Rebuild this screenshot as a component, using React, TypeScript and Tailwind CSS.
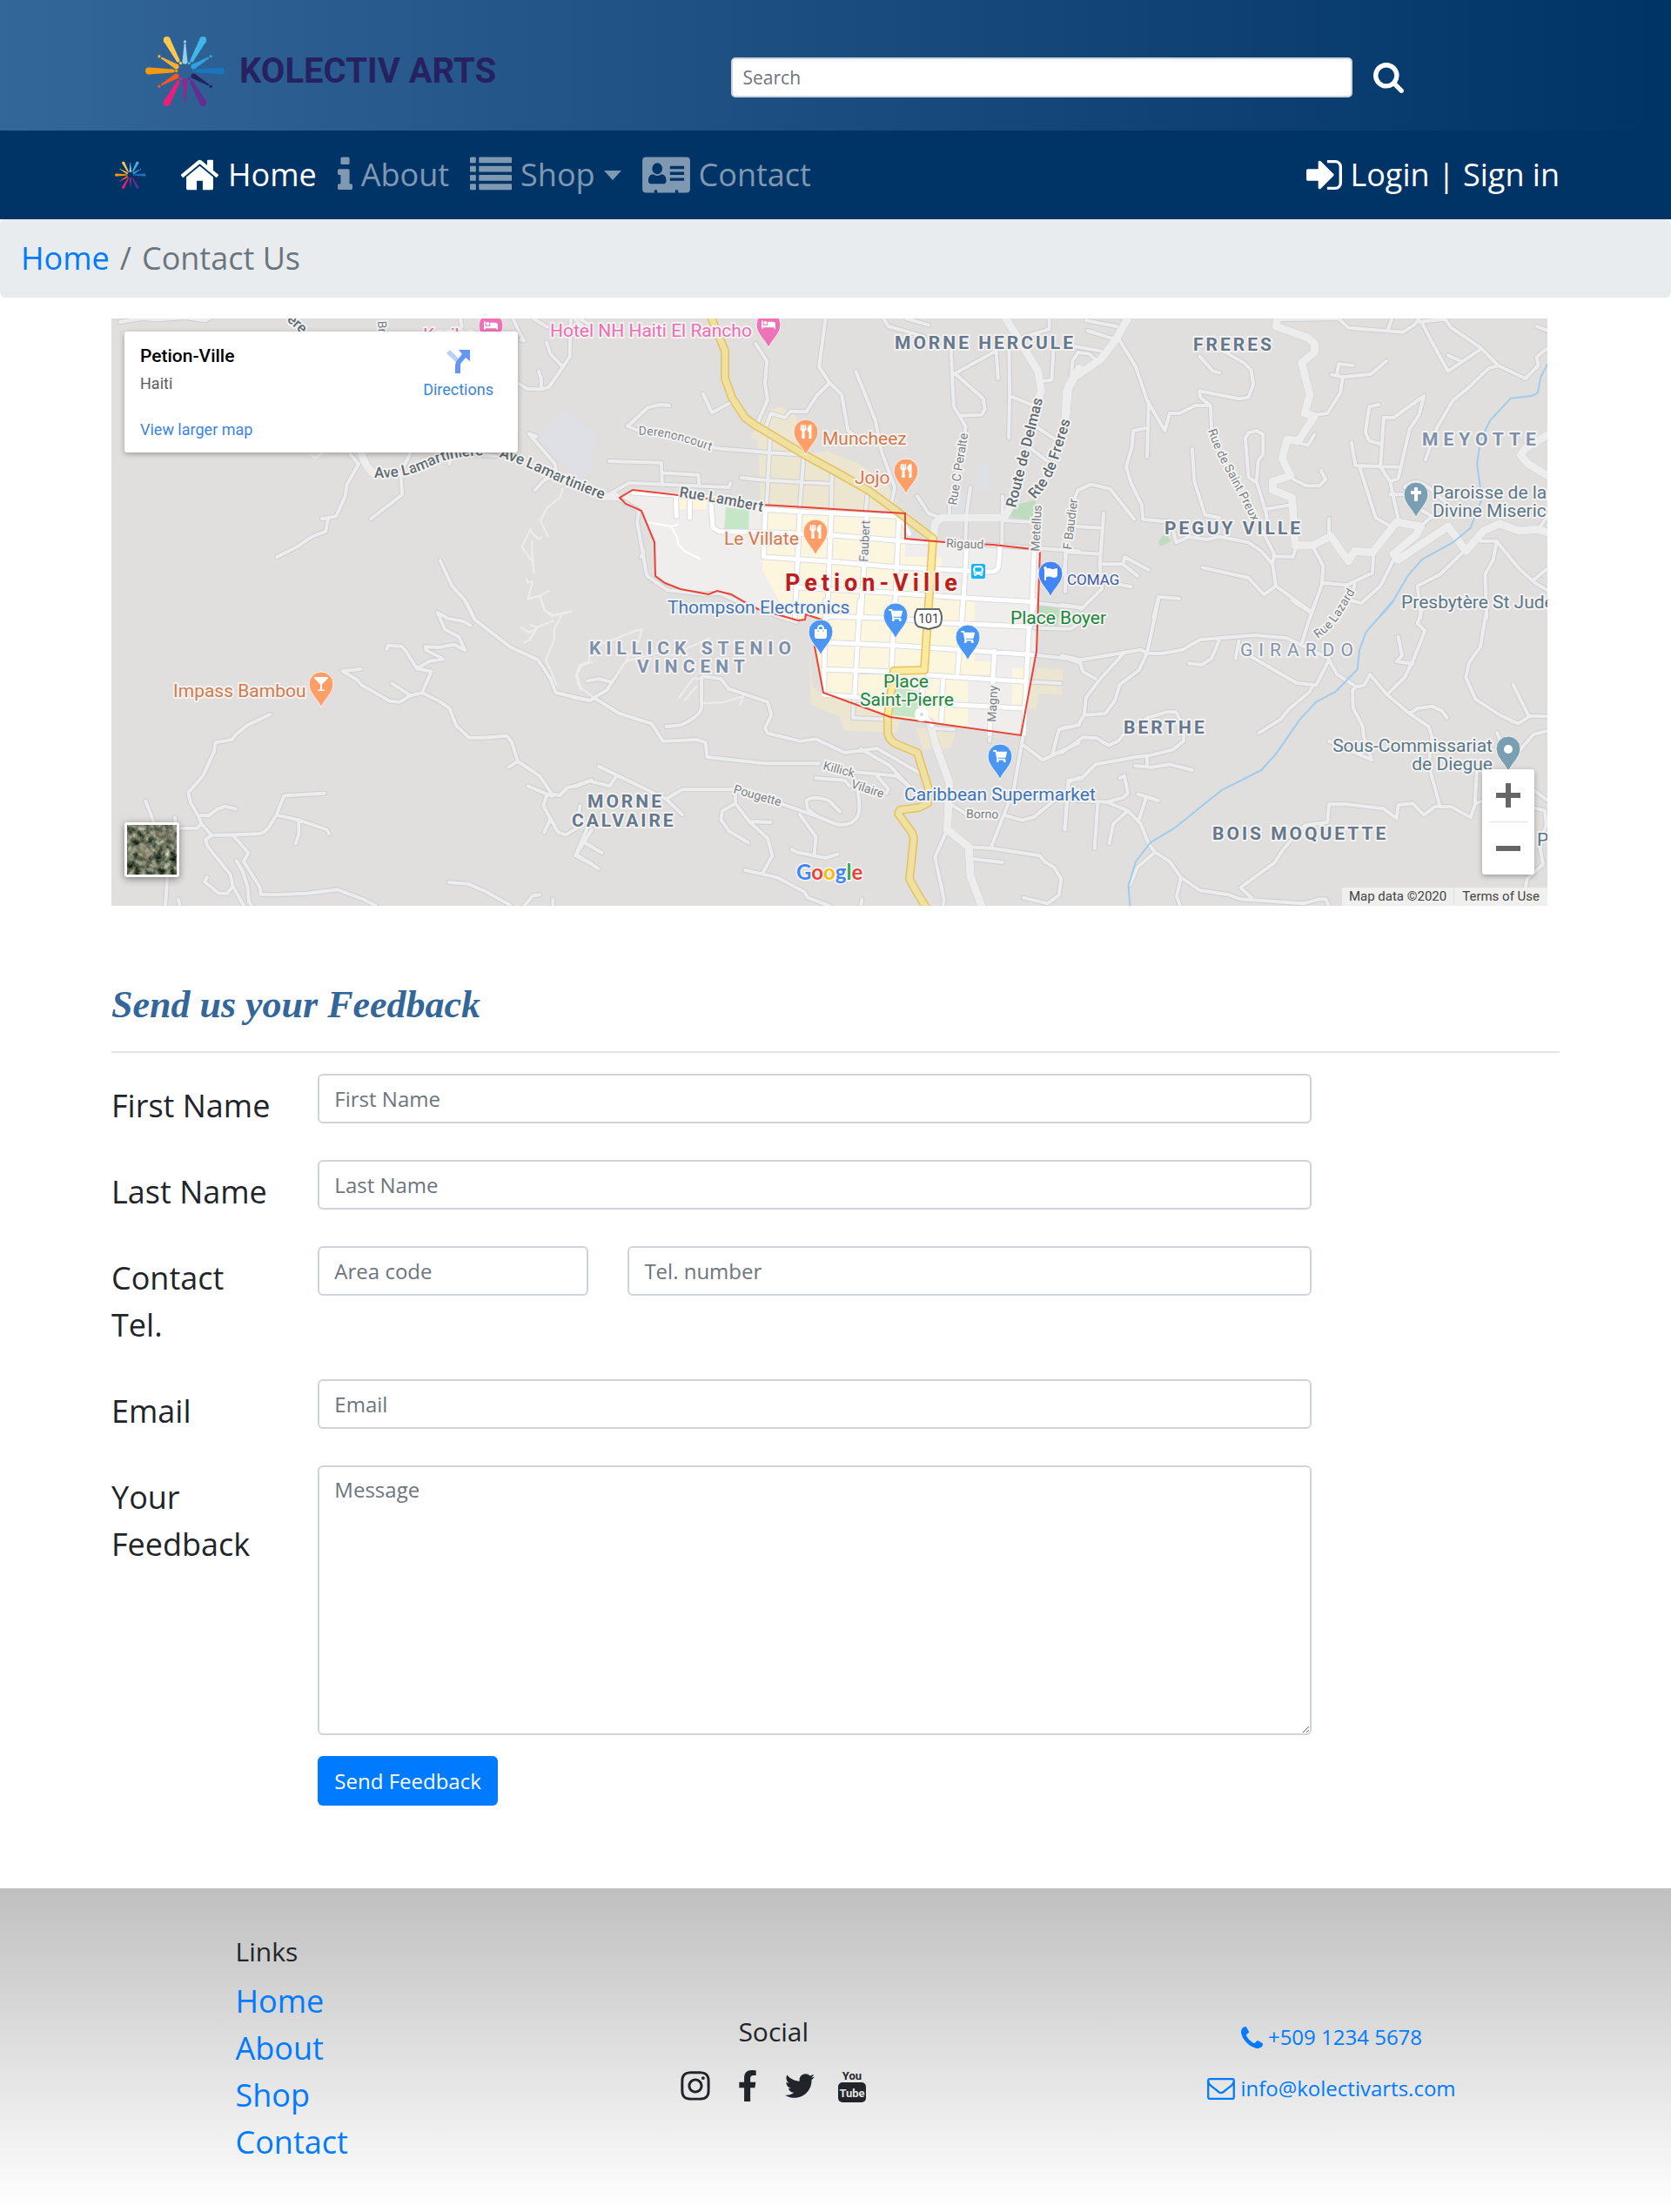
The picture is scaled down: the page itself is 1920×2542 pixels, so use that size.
import React from "react";
import {
  FaBed,
  FaCross,
  FaFacebookF,
  FaGlassMartini,
  FaInstagram,
  FaShoppingBag,
  FaShoppingCart,
  FaTwitter,
  FaUtensils,
  FaBus,
  FaFlag,
} from "react-icons/fa";

/* ---------- Icons ---------- */

type GlyphProps = { box: string; className: string; children: React.ReactNode };

function Glyph({ box, className, children }: GlyphProps) {
  return (
    <svg viewBox={box} className={`shrink-0 fill-current ${className}`} aria-hidden="true">
      {children}
    </svg>
  );
}

const HomeIcon = () => (
  <Glyph box="64 0 1664 1792" className="h-12 w-[45px]">
    <path d="M1472 992v480q0 26-19 45t-45 19h-384v-384h-256v384h-384q-26 0-45-19t-19-45v-480q0-1 .5-3t.5-3l575-474 575 474q1 2 1 6zm223-69l-62 74q-8 9-21 11h-3q-13 0-21-7l-692-577-692 577q-12 8-24 7-13-2-21-11l-62-74q-8-10-7-23.5t11-21.5l719-599q32-26 76-26t76 26l244 204v-195q0-14 9-23t23-9h192q14 0 23 9t9 23v408l219 182q10 8 11 21.5t-7 23.5z" />
  </Glyph>
);

const InfoIcon = () => (
  <Glyph box="576 0 640 1792" className="h-12 w-[17px]">
    <path d="M1216 1344v128q0 26-19 45t-45 19h-512q-26 0-45-19t-19-45v-128q0-26 19-45t45-19h64v-384h-64q-26 0-45-19t-19-45v-128q0-26 19-45t45-19h384q26 0 45 19t19 45v576h64q26 0 45 19t19 45zm-128-1152v192q0 26-19 45t-45 19h-256q-26 0-45-19t-19-45v-192q0-26 19-45t45-19h256q26 0 45 19t19 45z" />
  </Glyph>
);

const ListIcon = () => (
  <Glyph box="0 0 1792 1792" className="h-12 w-12">
    {[128, 512, 896, 1280].map((y) => (
      <React.Fragment key={y}>
        <rect x="0" y={y} width="256" height="256" rx="32" />
        <rect x="384" y={y} width="1408" height="256" rx="32" />
      </React.Fragment>
    ))}
  </Glyph>
);

const CardIcon = () => (
  <Glyph box="0 0 2048 1792" className="h-12 w-[55px]">
    <path
      fillRule="evenodd"
      d="M160 128H1888Q2048 128 2048 288V1504Q2048 1664 1888 1664H1536V1568Q1536 1536 1504 1536H1440Q1408 1536 1408 1568V1664H640V1568Q640 1536 608 1536H544Q512 1536 512 1568V1664H160Q0 1664 0 1504V288Q0 128 160 128ZM460 870Q256 880 256 1150Q256 1280 370 1280H910Q1024 1280 1024 1150Q1024 880 820 870Q740 930 640 930Q540 930 460 870ZM640 384A220 240 0 0 0 640 864A220 240 0 0 0 640 384ZM1184 512V640H1792V512ZM1184 768V896H1792V768ZM1184 1024V1152H1792V1024Z"
    />
  </Glyph>
);

const SignInIcon = () => (
  <Glyph box="128 0 1536 1792" className="h-12 w-[41px]">
    <path d="M1312 896q0 26-19 45l-544 544q-19 19-45 19t-45-19-19-45v-288h-448q-26 0-45-19t-19-45v-384q0-26 19-45t45-19h448v-288q0-26 19-45t45-19 45 19l544 544q19 19 19 45zm352-352v704q0 119-84.5 203.5t-203.5 84.5h-320q-13 0-22.5-9.5t-9.5-22.5q0-4-1-20t-.5-26.5 3-23.5 10-19.5 20.5-6.5h320q66 0 113-47t47-113v-704q0-66-47-113t-113-47h-312l-11.5-1-11.5-3-8-5.5-7-9-2-13.5q0-4-1-20t-.5-26.5 3-23.5 10-19.5 20.5-6.5h320q119 0 203.5 84.5t84.5 203.5z" />
  </Glyph>
);

const SearchIcon = () => (
  <Glyph box="64 128 1664 1664" className="h-[35px] w-[35px]">
    <path d="M1216 832q0-185-131.5-316.5t-316.5-131.5-316.5 131.5-131.5 316.5 131.5 316.5 316.5 131.5 316.5-131.5 131.5-316.5zm512 832q0 52-38 90t-90 38q-54 0-90-38l-343-342q-179 124-399 124-143 0-273.5-55.5t-225-150-150-225-55.5-273.5 55.5-273.5 150-225 225-150 273.5-55.5 273.5 55.5 225 150 150 225 55.5 273.5q0 220-124 399l343 343q37 37 37 90z" />
  </Glyph>
);

const PhoneIcon = () => (
  <Glyph box="192 128 1408 1408" className="h-[25px] w-[25px]">
    <path d="M1600 1240q0 27-10 70.5t-21 68.5q-21 50-122 106-94 51-186 51-27 0-53-3.5t-57.5-12.5-47-14.5-55.5-20.5-49-18q-98-35-175-83-127-79-264-216t-216-264q-48-77-83-175-3-9-18-49t-20.5-55.5-14.5-47-12.5-57.5-3.5-53q0-92 51-186 56-101 106-122 25-11 68.5-21t70.5-10q14 0 21 3 18 6 53 76 11 19 30 54t35 63.5 31 53.5q3 4 17.5 25t21.5 35.5 7 28.5q0 20-28.5 50t-62 55-62 53-28.5 46q0 9 5 22.5t8.5 20.5 14 24 11.5 19q76 137 174 235t235 174q2 1 19 11.5t24 14 20.5 8.5 22.5 5q18 0 46-28.5t53-62 55-62 50-28.5q14 0 28.5 7t35.5 21.5 25 17.5q25 15 53.5 31t63.5 35 54 30q70 35 76 53 3 7 3 21z" />
  </Glyph>
);

const EnvelopeIcon = () => (
  <Glyph box="0 256 1792 1408" className="h-[25px] w-8">
    <path d="M1664 1504v-768q-32 36-69 66-268 206-426 338-51 43-83 67t-86.5 48.5-102.5 24.5h-2q-48 0-102.5-24.5t-86.5-48.5-83-67q-158-132-426-338-37-30-69-66v768q0 13 9.5 22.5t22.5 9.5h1472q13 0 22.5-9.5t9.5-22.5zm0-1051v-24.5l-.5-13-3-12.5-5.5-9-9-7.5-14-2.5h-1472q-13 0-22.5 9.5t-9.5 22.5q0 168 147 284 193 152 401 317 6 5 35 29.5t46 37.5 44.5 31.5 50.5 27.5 43 9h2q20 0 43-9t50.5-27.5 44.5-31.5 46-37.5 35-29.5q208-165 401-317 54-43 100.5-115.5t46.5-131.5zm128-37v1088q0 66-47 113t-113 47h-1472q-66 0-113-47t-47-113v-1088q0-66 47-113t113-47h1472q66 0 113 47t47 113z" />
  </Glyph>
);

const YoutubeIcon = () => (
  <svg viewBox="0 0 34 40" className="h-10 w-[34px]" aria-hidden="true">
    <text x="17" y="13" textAnchor="middle" className="fill-[#212529] font-[Roboto] text-[13px] font-bold">
      You
    </text>
    <rect x="1" y="16" width="32" height="23" rx="5" fill="#212529" />
    <text x="17" y="33" textAnchor="middle" className="fill-[#e4e4e4] font-[Roboto] text-[13px] font-bold">
      Tube
    </text>
  </svg>
);

/* ---------- Logo ---------- */

// Each ray: outer x, outer y, outer radius, inner x, inner y, inner radius, colour.
const rays: [number, number, number, number, number, number, string][] = [
  [25, 5, 4, 38, 29, 2, "#ffc94d"],
  [67, 5, 4, 54, 29, 2, "#41b6e9"],
  [46, 10, 1, 46, 30, 3, "#8fd0f0"],
  [19, 26, 1, 36, 36, 3, "#fbb034"],
  [73, 26, 1, 56, 36, 3, "#2fa3dc"],
  [4, 41, 4, 32, 41, 2, "#f59a0c"],
  [88, 41, 4, 60, 41, 2, "#1a75bc"],
  [19, 57, 1, 36, 47, 3, "#f05a22"],
  [73, 57, 1, 56, 47, 3, "#262262"],
  [25, 78, 4, 38, 54, 2, "#ed1e79"],
  [67, 78, 4, 54, 54, 2, "#662d91"],
  [46, 73, 1, 46, 53, 3, "#92278f"],
];

const beads: [number, number, string][] = [
  [41, 32, "#ffc94d"],
  [51, 32, "#41b6e9"],
  [46, 7, "#8fd0f0"],
  [16, 24, "#fbb034"],
  [76, 24, "#2fa3dc"],
  [36, 41, "#f59a0c"],
  [56, 41, "#1a75bc"],
  [16, 59, "#f05a22"],
  [76, 59, "#262262"],
  [41, 50, "#ed1e79"],
  [51, 50, "#662d91"],
  [46, 76, "#92278f"],
];

function Sunburst({ className }: { className: string }) {
  return (
    <svg viewBox="0 0 93 82" className={`shrink-0 ${className}`} aria-hidden="true">
      {rays.map(([ox, oy, ow, ix, iy, iw, color]) => {
        const length = Math.hypot(ox - ix, oy - iy);
        const nx = (oy - iy) / length;
        const ny = (ix - ox) / length;
        return (
          <g key={color} fill={color}>
            <circle cx={ox} cy={oy} r={ow} />
            <circle cx={ix} cy={iy} r={iw} />
            <path
              d={`M${ox + nx * ow} ${oy + ny * ow}L${ix + nx * iw} ${iy + ny * iw}L${ix - nx * iw} ${iy - ny * iw}L${ox - nx * ow} ${oy - ny * ow}Z`}
            />
          </g>
        );
      })}
      {beads.map(([cx, cy, color]) => (
        <circle key={color} cx={cx} cy={cy} r="1.7" fill={color} />
      ))}
    </svg>
  );
}

/* ---------- Map ---------- */

type Sheet = { at: string; minor: string; major: string; trail: string };

const sheets: Sheet[] = [
  {
    at: "translate(120 360) scale(.35714 .33333)",
    minor:
      "M790 485L818 520 780 590 775 630 745 700 700 709M720 705L712 752 668 770 620 805 555 840M985 480L953 550 958 625 858 708M1120 480L1110 520M1200 487L1260 492M1145 18L1150 45 1140 65M1315 18L1330 55 1350 95 1340 92M1380 18L1425 48M1500 18L1497 150 1475 185 1430 255 1405 262 1360 260 1325 238M1475 185L1435 140 1422 100M1405 255V225L1397 200M1530 18L1568 45M1390 425L1365 415 1450 520 1455 555 1415 575 1385 610M1080 852L1118 940 1162 992 1190 1050M50 30L120 18 170 22 260 15 325 25 345 12",
    major: "M825 470Q835 530 870 555",
    trail:
      "M665 490L678 500 700 482M1475 605L1465 635 1425 670 1403 715 1427 770M1372 742L1343 805 1380 860M1376 785V830L1382 895M1370 750L1395 778 1405 772M1358 915L1362 928 1378 925 1362 985 1400 975 1430 957M1400 975L1415 1022 1440 1045 1500 1028",
  },
  {
    at: "translate(120 690) scale(.35714 .33333)",
    minor:
      "M1160 0L1190 65 1305 160 1395 205 1435 270 1452 318 1560 345M1178 86L1155 72 1105 62 1072 42 1095 100 1140 125 1160 172 1125 152 1075 162 1032 160 1035 172 1090 202 1045 210 1005 235M908 168L912 155 955 158 970 175 1005 235 1052 245 1022 318 985 328 925 286M985 328L950 350 918 347 825 290 815 275 765 243 825 237M1022 318L1078 348 1110 372 1132 432 1173 473 1220 473 1295 467 1310 488 1330 555 1300 575M1330 555L1400 605 1440 668 1465 672 1490 645 1520 640 1568 620M1363 640L1440 675M1422 675L1412 708 1435 752 1415 800M1435 752L1460 800 1485 808 1520 785 1530 708M1568 790L1515 880 1568 908M1545 835L1568 850M533 393L460 430 425 460 410 480 357 490 353 520 317 605 270 662 277 697 303 745 312 770 345 810 495 805Q520 798 530 780L553 740 578 673 708 665M553 740L625 757 715 790 722 805M625 757V808L615 838M303 740L335 742 365 718 390 710 422 719M312 770L297 785 230 786M133 692L160 768M227 748L228 768M345 810L325 825 332 848 405 945 413 985 448 1052M413 985L395 1010 368 1010 322 970 330 955M415 812L463 870 448 900 500 988 503 1013 540 1015 650 1010 750 997 832 1030 875 1054M425 898L445 935 460 985 465 1040 475 1054M202 955L196 1054M238 1030L243 1054M1108 972L1170 977 1220 1000 1305 1050M1350 1054L1378 1018 1400 1015M1443 1030V1054",
    major: "",
    trail:
      "M1405 0L1418 35 1445 50 1500 38M1445 70L1393 92 1370 85M1393 92L1368 135 1350 145M1340 92L1365 110 1385 100M1475 40L1447 100 1447 135 1420 205 1455 292M1568 212L1535 225 1520 255 1532 300 1568 330",
  },
  {
    at: "translate(660 360) scale(.3699 .33333)",
    minor:
      "M563 105L598 165 592 240 600 298 570 375M780 18L760 185 793 240 830 280 850 405 885 430M793 240L752 285 720 340 670 338 655 360 610 345 595 390M875 202L935 370 955 480 995 600 985 655M295 318L265 315 228 325 165 390 200 405M390 455L440 465 600 480 715 488M400 278L427 343 490 305M108 510L270 515 272 580M272 550L385 557 388 595M90 635L170 585 480 600 485 585M608 425L597 665M712 495L700 670M800 550L798 670M910 620L905 680M518 567L590 575 800 588M130 635L200 680 195 720 225 905 290 955 400 968 450 965 520 1000 560 1025M215 820L207 840M960 18L975 45 1085 80M1030 18L1100 40M1170 130L1178 320 1215 390 1212 430M1178 210L1310 130 1316 225M1185 210L1270 295 1275 330 1265 350 1195 353M1350 120L1352 285 1349 430M1352 285L1430 320M1475 18V55L1400 80M1488 120L1483 230 1450 235M1440 395L1500 440M1410 460L1475 515M1230 600L1217 700 1215 800M1330 630L1328 800M1065 630L1100 690 1125 700M1165 690V660M1340 715L1430 720M1280 798L1568 820M1525 820V960M1440 1000L1568 1015M0 18L30 50",
    major: "M80 632L130 632M1340 18L1440 200 1450 270 1430 320M1568 190L1535 250 1525 380M1115 775L1120 725 1140 705 1335 705 1355 665",
    trail: "",
  },
  {
    at: "translate(660 690) scale(.3699 .33333)",
    minor:
      "M0 335L50 345 60 335M60 335L100 310 130 260M40 278L75 270 110 280M60 335L140 390 240 425 275 485 380 480 408 490 412 540 590 562 760 562M860 590L1000 605 1040 640M400 262L455 270 480 305 600 350 612 395 592 440 600 458 700 485 750 478 840 525 940 510 1080 600M890 512L980 570 1030 630M395 265V370Q390 400 330 430L285 435M940 605L975 650 970 665M750 613L840 620 855 640M880 655Q890 720 880 745 860 780 815 772L755 745 640 700M755 745L725 720 720 690Q740 670 790 690L825 728M495 652H335L285 685 335 738M75 572L285 685M130 605L110 640 45 622 0 640M500 665V700L460 725 455 755 480 795 540 835M500 700L545 765 600 820 615 880 585 940M545 762L610 765M700 738L750 815 745 880M675 858L690 868 780 888 818 875M530 930L630 955 715 1005 725 1025 795 1054M45 770L5 875 75 925M25 830L85 870M890 1054L893 1030M900 345H868L865 405 975 410M1158 790L1120 885 1148 1030 1145 1054M1225 850L1300 855 1445 880 1460 900 1490 920 1512 960 1505 1015 1470 1045 1395 1025M1230 890L1330 903M1395 460L1365 650 1295 850M1335 740L1390 758 1430 745 1500 680 1568 650M1165 700L1215 735M1110 440L1180 445M1395 500L1420 520 1455 550 1568 490M1485 530L1505 445 1568 430M1568 610L1535 625 1523 790M1430 188L1530 200 1568 215M1400 280L1510 286M1430 95L1540 98 1568 80M1292 450L1290 485M620 50L690 75",
    major: "M1105 420L1120 490 1165 630 1158 790 1225 850 1230 950 1265 1054",
    trail:
      "M130 260L200 140 210 100 190 105 50 165 45 210 15 225 5 260 20 310M395 355L460 352 525 330 515 360M395 270L370 268 325 335M380 295L342 345M300 190L420 130M160 210L260 180",
  },
  {
    at: "translate(1220 360) scale(.3699 .33333)",
    minor:
      "M672 22L860 18 890 50 1060 65 1095 40 1110 18M1110 30L1190 20 1210 50 1300 118 1355 180 1440 225 1480 180 1475 150 1509 120M1120 35L1150 100 1200 200 1300 125M1200 145L1240 165M1355 180L1325 190 1260 260 1215 300 1165 395 1130 505M1025 20L1012 60M1475 45L1509 60M75 25L170 45M80 60L165 90M30 215L33 165 50 135 85 140 105 160M20 110L120 130M175 85L230 185 265 300 320 405 335 345 365 345 415 318 462 318 465 400M270 305L265 495M265 395L222 405 218 460 200 530 215 585 248 660 252 710 340 720 355 790 395 770 450 780 490 770 580 790 620 820 655 865 665 940 628 970 580 912 438 877M462 318L430 290 428 268 550 295 580 290 595 245 588 195 565 170 500 130M428 148L470 200 490 205M405 467L412 580 445 695 490 705M595 690L660 830 655 860M660 838L718 840 728 805M600 580L580 565 570 430 580 412 605 405 625 418 625 485 610 510 605 580 635 690 640 740M635 675L715 660M720 572L760 595 800 595 820 572 805 542M745 450L765 455 785 418M785 350L825 345 865 275 873 220 960 210 1008 165M838 212L873 220M855 210L860 175 905 180M830 708V770M985 315L955 322 943 410 955 440 990 450M990 525L1000 360 1030 360 1125 285 1110 350 1080 400 1045 570 1020 580 1045 710M900 445L912 525 1045 530M925 530L975 705 1030 740M990 530L1020 580M1020 625H1060M1065 600Q1100 560 1150 610L1190 650M1110 740L1150 700 1120 680M780 805L812 870 808 935 770 1050M812 930L885 937 965 895 968 830M910 935L905 960M665 940L770 1025M1035 840L990 940 930 1000 900 990M1300 785H1350L1420 880 1470 930 1509 955M1250 820L1175 900 1105 940 1115 1050M1350 790L1340 850 1315 900 1320 1050M1465 920L1509 880M1480 745L1509 700M40 640L50 610 90 590 150 605 225 710M40 735L125 740M130 690L118 870 125 950 60 1020M10 822L120 830M118 865L190 865 235 905M190 865L195 840 270 885M15 820L5 900M155 930L215 943M365 983L300 978 285 1050M0 1005L60 1015",
    major:
      "M205 18L165 95 120 160 40 220 15 270 10 380M670 18L665 45 765 85 785 105 785 135 745 170 770 280 755 345 785 355 735 440 700 435 685 500 710 560 655 580 655 610 715 635 725 800 780 800 835 768 890 855 910 820 965 825 1040 720 1115 735 1100 765 1030 830 1045 850 1200 735 1255 820 1310 750 1360 725 1420 750 1480 745 1509 755M1509 420L1440 465 1425 490 1450 520 1509 560",
    trail: "",
  },
  {
    at: "translate(1220 690) scale(.3699 .33333)",
    minor:
      "M0 190L60 205 245 170 265 182 310 183 375 170 430 135 600 120 700 130 830 200M745 150L770 60 790 0M715 0L770 40M300 0L265 180 240 240 180 290 165 345 135 390 70 395 50 430 0 440M190 185L120 270 75 335 70 395M55 205L65 245 105 270M490 135L465 200 435 222 395 217M550 140L540 200M590 195L730 285 790 292 830 205 855 255 915 298 940 292 957 255 1010 325 1065 265 1090 210 1128 105 1105 80 1118 35M1045 125L1057 190 1040 210 1090 218M1010 325L1080 390 1140 435 1150 470 1140 570 1175 710M1080 390L1105 372 1150 365 1180 380 1197 405M780 292L770 315 705 375 680 410 612 457M915 298L903 310 905 370 935 435 937 465 963 550 830 485M1320 30L1300 160 1265 215 1255 265 1285 340 1360 395 1418 425 1455 398 1509 400M1402 290L1450 398M1352 455L1365 490M1509 450L1465 462 1420 520M0 525L65 472 110 475 145 500 175 485 200 450 265 405 325 385 355 385 380 440 378 485 345 515 270 535 230 540 105 565 60 615 20 620 10 790M265 540V570M228 570L280 575 335 565 405 585M180 612L195 605 205 665 190 680 140 695 50 690M112 695L102 855M140 695L205 725 245 770 270 840 290 868 335 900 370 955 430 1000 520 1015 555 1030 750 1045 800 1030 820 1030 830 1054M205 725L160 770 147 838M237 668L300 690M262 680L240 755M290 868L235 920 212 980M370 955L357 1020 368 1054M590 1025L555 990 660 905 690 855 755 775 825 765 830 703 880 702 1000 718 1040 752 1045 705 1090 700 1125 740 1160 710 1210 712 1270 748 1285 700 1310 690M1290 580L1283 700M1468 655L1509 690M1468 715L1500 725 1505 770 1485 850 1495 910 1445 960 1430 1054",
    major: "",
    trail: "",
  },
];

const townStreets = [
  {
    at: "translate(660 360) scale(.3699 .33333)",
    d: "M180 618L420 635 580 675 690 683 1010 700 1040 760M593 680L588 840M700 683L685 1050M798 690L785 1050M908 700L890 1050M1008 700L995 1050M588 840L790 855 1000 875 1220 887 1290 892Q1315 892 1318 870L1322 805M425 660L430 740 450 752 600 755 800 765 1020 785 1110 790M690 945L1000 965 1200 980 1430 995M1218 810L1205 1050M1428 820L1420 1050M315 630L317 700M358 640V705",
  },
  {
    at: "translate(660 690) scale(.3699 .33333)",
    d: "M780 0L775 320M887 0L870 330M995 0L985 240M1207 0L1190 250M1430 0L1412 90 1395 460M1305 175L1290 460M1145 265L1140 420M780 55L1000 62 1150 78 1415 90M780 145L1000 155 1200 170 1430 188M775 238L980 245M1100 258L1400 280M1150 358L1395 372M775 325L900 335M1080 290L1085 390 1110 430",
  },
];

const townOutline =
  "M712 572L719 579 737 587 752 623 753 662 764 670 782 677 814 683 824 679 840 683 856 692 871 700 917 713 925 712 926 706 944 712 936 743 946 796 1023 824 1173 845 1191 748 1193 690 1195 632 1141 626 1085 623 1040 619 1040 590 926 583 875 580 727 563Z";

type Tone = "food" | "shop" | "district" | "pale" | "thin" | "park" | "civic" | "hotel";

const tones: Record<Tone, string> = {
  food: "fill-[#d27a4c]",
  shop: "fill-[#3f75b9]",
  district: "fill-[#66788e] font-bold tracking-[3px]",
  pale: "fill-[#7e90aa] font-bold tracking-[6px]",
  thin: "fill-[#8595ad] tracking-[7px]",
  park: "fill-[#1b873b]",
  civic: "fill-[#5c7888]",
  hotel: "fill-[#ec6fb4]",
};

const places: { text: string; x: number; y: number; tone: Tone; end?: boolean }[] = [
  { text: "Hotel NH Haiti El Rancho", x: 632, y: 387, tone: "hotel" },
  { text: "Kariba", x: 486, y: 392, tone: "hotel" },
  { text: "Muncheez", x: 945, y: 511, tone: "food" },
  { text: "Jojo", x: 982, y: 556, tone: "food" },
  { text: "Le Villate", x: 832, y: 626, tone: "food" },
  { text: "Impass Bambou", x: 199, y: 801, tone: "food" },
  { text: "Thompson Electronics", x: 767, y: 705, tone: "shop" },
  { text: "Caribbean Supermarket", x: 1039, y: 920, tone: "shop" },
  { text: "Place Boyer", x: 1161, y: 717, tone: "park" },
  { text: "Place", x: 1015, y: 790, tone: "park" },
  { text: "Saint-Pierre", x: 988, y: 811, tone: "park" },
  { text: "Paroisse de la", x: 1646, y: 573, tone: "civic" },
  { text: "Divine Misericorde", x: 1646, y: 594, tone: "civic" },
  { text: "Presbytère St Jude", x: 1610, y: 699, tone: "civic" },
  { text: "Sous-Commissariat", x: 1715, y: 864, tone: "civic", end: true },
  { text: "de Diegue", x: 1715, y: 885, tone: "civic", end: true },
  { text: "P", x: 1766, y: 972, tone: "civic" },
  { text: "MORNE HERCULE", x: 1028, y: 401, tone: "district" },
  { text: "FRERES", x: 1371, y: 403, tone: "district" },
  { text: "PEGUY VILLE", x: 1338, y: 614, tone: "district" },
  { text: "BERTHE", x: 1291, y: 843, tone: "district" },
  { text: "BOIS MOQUETTE", x: 1393, y: 965, tone: "district" },
  { text: "MORNE", x: 675, y: 928, tone: "district" },
  { text: "CALVAIRE", x: 657, y: 950, tone: "district" },
  { text: "MEYOTTE", x: 1634, y: 512, tone: "pale" },
  { text: "KILLICK STENIO", x: 677, y: 752, tone: "pale" },
  { text: "VINCENT", x: 732, y: 773, tone: "pale" },
  { text: "GIRARDO", x: 1425, y: 754, tone: "thin" },
];

const curvedStreets: { text: string; path: string; small?: boolean }[] = [
  { text: "Ave Lamartiniere", path: "M430 549Q470 550 500 533 525 523 566 523" },
  { text: "Ave Lamartiniere", path: "M573 525Q610 537 640 553L710 581" },
  { text: "Rue Lambert", path: "M780 571L820 577 890 591" },
  { text: "Rte de Freres", path: "M1189 574Q1208 555 1217 525L1232 477" },
  { text: "Derenoncourt", path: "M734 500Q765 498 830 523", small: true },
  { text: "Rue de Saint Preux", path: "M1388 495Q1396 520 1412 547L1452 625", small: true },
  { text: "Rue Lazard", path: "M1514 734Q1530 724 1541 706L1568 662", small: true },
];

const straightStreets: { text: string; x: number; y: number; angle: number; big?: boolean }[] = [
  { text: "Route de Delmas", x: 1167, y: 584, angle: -76, big: true },
  { text: "ere", x: 329, y: 368, angle: 42, big: true },
  { text: "Rue C Peralte", x: 1099, y: 581, angle: -81 },
  { text: "Faubert", x: 997, y: 646, angle: -87 },
  { text: "Rigaud", x: 1087, y: 629, angle: 2 },
  { text: "Metellus", x: 1194, y: 634, angle: -87 },
  { text: "F Baudier", x: 1231, y: 632, angle: -83 },
  { text: "Killick", x: 945, y: 884, angle: 15 },
  { text: "Vilaire", x: 977, y: 905, angle: 18 },
  { text: "Pougette", x: 842, y: 911, angle: 16 },
  { text: "Borno", x: 1110, y: 940, angle: 1 },
  { text: "Magny", x: 1144, y: 830, angle: -87 },
  { text: "Br", x: 434, y: 369, angle: 87 },
];

type IconType = React.ComponentType<{ x?: number; y?: number; size?: number; color?: string }>;

const pins: { x: number; tip: number; color: string; icon?: IconType }[] = [
  { x: 883, tip: 400, color: "#ee72b8", icon: FaBed },
  { x: 564, tip: 401, color: "#ee72b8", icon: FaBed },
  { x: 926, tip: 523, color: "#ff9e67", icon: FaUtensils },
  { x: 1041, tip: 568, color: "#ff9e67", icon: FaUtensils },
  { x: 937, tip: 638, color: "#ff9e67", icon: FaUtensils },
  { x: 369, tip: 813, color: "#ff9e67", icon: FaGlassMartini },
  { x: 943, tip: 753, color: "#4b96f3", icon: FaShoppingBag },
  { x: 1029, tip: 734, color: "#4b96f3", icon: FaShoppingCart },
  { x: 1112, tip: 759, color: "#4b96f3", icon: FaShoppingCart },
  { x: 1149, tip: 896, color: "#4b96f3", icon: FaShoppingCart },
  { x: 1207, tip: 686, color: "#4285f4", icon: FaFlag },
  { x: 1627, tip: 595, color: "#7a9fb2", icon: FaCross },
  { x: 1733, tip: 887, color: "#7a9fb2" },
];

function MapDrawing() {
  return (
    <svg
      viewBox="128 366 1650 675"
      preserveAspectRatio="xMidYMid slice"
      className="absolute inset-0 h-full w-full bg-[#e0dfdd] font-[Roboto]"
      role="img"
      aria-label="Map of Petion-Ville"
    >
      <clipPath id="town">
        <path d={townOutline} />
      </clipPath>
      <path d="M650 468L680 500V540L667 553 617 500Z" fill="#dfe0e6" />
      <path d="M660 482Q692 500 684 520L660 550Z" fill="#dfe0e6" />
      <g fill="#ece5d0">
        <path d="M884 472L897 467 915 478 921 505 930 522 950 518 985 532 1015 552 1032 575 1024 587 874 580 871 507 862 502Z" />
        <path d="M930 745L934 790 946 798 982 805 1022 825 1034 828 1030 842 970 840 965 824 932 810Z" />
        <path d="M1052 836L1098 840 1093 860 1061 862Z" />
        <path d="M1192 767L1221 770 1220 798 1193 797 1191 815 1178 814Z" />
      </g>
      <g fill="#dfe0e6">
        <path d="M1125 533L1135 532 1138 565 1120 563Z" />
        <path d="M1096 570L1110 568V590L1094 592Z" />
      </g>
      <g fill="#c0dcbe">
        <path d="M1162 582L1190 574 1189 598 1158 594Z" />
        <path d="M1189 694L1218 700 1215 720 1189 718Z" />
        <path d="M1338 612L1346 622 1333 628 1331 623Z" />
      </g>

      <g clipPath="url(#town)">
        <path d={townOutline} fill="#efeeec" />
        <path
          d="M778 568H812V585H778ZM876 583H1040V640H1082V690H1120V760H1143V775H1112V840H930V720H895V690L876 655ZM1163 768H1182V810H1163Z"
          fill="#fdf6df"
        />
        <path d="M834 583L861 586 860 610 832 609Z" fill="#c5e7c8" />
        <path d="M1026 788L1063 796 1062 826 1026 822Z" fill="#c5e7c8" />
      </g>

      <g fill="none" strokeLinecap="round" strokeLinejoin="round">
        {sheets.map((s) => (
          <g key={s.at} transform={s.at} stroke="#cdced3">
            <path d={s.minor} strokeWidth="6" vectorEffect="non-scaling-stroke" />
            {s.major && <path d={s.major} strokeWidth="10" vectorEffect="non-scaling-stroke" />}
          </g>
        ))}
        {sheets.map((s) => (
          <g key={s.at} transform={s.at} stroke="#ededed">
            <path d={s.minor} strokeWidth="4" vectorEffect="non-scaling-stroke" />
            {s.major && <path d={s.major} strokeWidth="9" vectorEffect="non-scaling-stroke" />}
            {s.trail && <path d={s.trail} strokeWidth="2" vectorEffect="non-scaling-stroke" />}
          </g>
        ))}
        <g stroke="#9fccec">
          <path
            transform="translate(1220 360) scale(.3699 .33333)"
            d="M1509 175L1488 220 1478 275 1460 285 1395 293 1330 370 1300 440 1290 520 1305 640 1270 740 1215 790 1120 848 1075 905 1025 1000 985 1050"
            strokeWidth="2"
            vectorEffect="non-scaling-stroke"
          />
          <path
            transform="translate(1220 690) scale(.3699 .33333)"
            d="M1030 0L945 110 925 170 918 238 850 315 790 350 740 410 665 530 620 585 500 652 445 700 350 785 275 835 230 900 207 985 212 1054"
            strokeWidth="2"
            vectorEffect="non-scaling-stroke"
          />
        </g>
        {townStreets.map((s) => (
          <path key={s.at} transform={s.at} d={s.d} stroke="#dadce2" strokeWidth="7" vectorEffect="non-scaling-stroke" />
        ))}
        {townStreets.map((s) => (
          <path key={s.at} transform={s.at} d={s.d} stroke="#ffffff" strokeWidth="5" vectorEffect="non-scaling-stroke" />
        ))}
        <path d="M744 600L771 605 779 603M771 605L778 617 779 625 786 633 804 642" stroke="#ffffff" strokeWidth="2" />
        <g stroke="#e5c162" strokeWidth="10">
          <path d="M815 360L833 403V435L841 457 856 480 867 488 925 523 960 542 997 563 1030 587 1071 618" />
          <path d="M1072 619L1062 770 1027 771 1020 824" />
          <path d="M1020 824V840Q1020 850 1030 855L1054 865 1067 907 1066 923 1056 928 1034 931 1032 935 1048 957 1050 963 1045 1010 1052 1023 1066 1046" />
        </g>
        <path
          d="M815 360L833 403V435L841 457 856 480 867 488 925 523 960 542 997 563 1030 587 1071 618M1020 824V840Q1020 850 1030 855L1054 865 1067 907 1066 923 1056 928 1034 931 1032 935 1048 957 1050 963 1045 1010 1052 1023 1066 1046"
          stroke="#efe1a2"
          strokeWidth="7"
        />
        <path d="M1072 619L1062 770 1027 771 1020 824" stroke="#feea9f" strokeWidth="7" />
        <path d={townOutline} stroke="#ea4335" strokeWidth="2" strokeLinejoin="miter" />
      </g>
      <circle cx="1059" cy="821" r="8" fill="#ffffff" />
      <circle cx="1059" cy="821" r="2" fill="#c5e7c8" />

      <g stroke="#f3f2f1" strokeWidth="4" strokeLinejoin="round" className="[paint-order:stroke]">
        {curvedStreets.map((s, i) => (
          <React.Fragment key={s.path}>
            <path id={`street-${i}`} d={s.path} fill="none" stroke="none" />
            <text className={s.small ? "fill-[#7b8186] text-[14px]" : "fill-[#5f6b70] text-[17px] font-medium"}>
              <textPath href={`#street-${i}`}>{s.text}</textPath>
            </text>
          </React.Fragment>
        ))}
        {straightStreets.map((s) => (
          <text
            key={s.text}
            transform={`translate(${s.x} ${s.y}) rotate(${s.angle})`}
            className={s.big ? "fill-[#5f6b70] text-[17px] font-medium" : "fill-[#7b8186] text-[14px]"}
          >
            {s.text}
          </text>
        ))}
        {places.map((p) => (
          <text
            key={p.text + p.y}
            x={p.x}
            y={p.y}
            textAnchor={p.end ? "end" : "start"}
            className={`text-[21px] ${tones[p.tone]}`}
          >
            {p.text}
          </text>
        ))}
        <text x="1226" y="672" className="fill-[#3a5ba8] text-[17px]">
          COMAG
        </text>
        <text x="902" y="679" className="fill-[#bb2018] text-[27px] font-bold tracking-[5px]">
          Petion-Ville
        </text>
      </g>

      {pins.map(({ x, tip, color, icon: Icon }) => (
        <g key={`${x}-${tip}`} transform={`translate(${x} ${tip})`}>
          <path
            d="M0 0C-3 -9 -14 -16 -14 -27A14 14 0 0 1 14 -27C14 -16 3 -9 0 0Z"
            fill={color}
            stroke="#f5f4f2"
            strokeWidth="1"
          />
          {Icon ? <Icon x={-8} y={-35} size={16} color="#ffffff" /> : <circle cy="-26" r="5" fill="#ffffff" />}
        </g>
      ))}

      <rect x="1116" y="648" width="16" height="17" rx="2" fill="#1ab4ee" />
      <FaBus x={1118} y={650} size={12} color="#ffffff" />
      <path
        d="M1054 700H1079Q1082 704 1082 709 1082 718 1078 720L1067 723 1055 720Q1051 718 1051 709 1051 704 1054 700Z"
        fill="#ffffff"
        stroke="#5f6368"
        strokeWidth="2"
      />
      <text x="1067" y="716" textAnchor="middle" className="fill-[#3c4043] text-[14px]">
        101
      </text>

      <text
        x="915"
        y="1011"
        stroke="#f6f6f6"
        strokeWidth="3"
        className="font-[Lato] text-[24px] font-bold [paint-order:stroke]"
      >
        <tspan fill="#4285f4">G</tspan>
        <tspan fill="#ea4335">o</tspan>
        <tspan fill="#fbbc04">o</tspan>
        <tspan fill="#4285f4">g</tspan>
        <tspan fill="#34a853">l</tspan>
        <tspan fill="#ea4335">e</tspan>
      </text>
    </svg>
  );
}

function SatelliteThumb() {
  return (
    <svg viewBox="0 0 57 57" className="h-full w-full" aria-hidden="true">
      <filter id="terrain" x="0" y="0" width="100%" height="100%" colorInterpolationFilters="sRGB">
        <feTurbulence type="fractalNoise" baseFrequency=".12" numOctaves="4" seed="7" />
        <feColorMatrix values="1.2 .5 0 0 -.46  1.1 .5 0 0 -.38  1 .5 0 0 -.41  0 0 0 0 1" />
      </filter>
      <rect width="57" height="57" filter="url(#terrain)" />
      <path d="M8 24L18 20 28 32 24 40 12 34Z" fill="#cfc3a4" opacity=".45" />
      <path d="M28 2L57 0V30L44 22 32 14Z" fill="#b5aa98" opacity=".3" />
    </svg>
  );
}

function LocationMap() {
  return (
    <section aria-label="Location" className="relative mr-[14px] h-[675px] overflow-hidden font-[Roboto]">
      <MapDrawing />

      <div className="absolute top-[15px] left-[15px] flex h-[139px] w-[452px] justify-between rounded-[3px] bg-white pt-[14px] pr-7 pl-[18px] shadow-[0_2px_6px_rgba(0,0,0,0.3)]">
        <div>
          <p className="text-[21px] leading-7 font-medium text-black">Petion-Ville</p>
          <p className="mt-[6px] text-[18px] leading-6 text-[#5b5b5b]">Haiti</p>
          <a href="#larger" className="mt-[29px] block text-[18px] leading-6 text-[#3a84df]">
            View larger map
          </a>
        </div>
        <a href="#directions" className="flex flex-col items-center pt-[7px] text-[18px] leading-6 text-[#3a84df]">
          <svg viewBox="0 0 27 27" className="mb-[7px] h-[27px] w-[27px]" aria-hidden="true">
            <path d="M0 4L4 0 13 9 13 16Z" fill="#b9d0fb" />
            <path d="M10 27V18Q10 14 13 11L18 5 14 0H27V13L22 9 17 15Q16 16 16 18V27Z" fill="#6496f9" />
          </svg>
          Directions
        </a>
      </div>

      <button
        type="button"
        aria-label="Show satellite imagery"
        className="absolute bottom-[33px] left-[15px] h-[63px] w-[63px] rounded-[3px] border-[3px] border-white bg-[#4a5443] shadow-[0_2px_9px_rgba(0,0,0,0.45)]"
      >
        <SatelliteThumb />
      </button>

      <div className="absolute right-[15px] bottom-9 flex h-[121px] w-[60px] flex-col rounded-[3px] bg-white shadow-[0_2px_6px_rgba(0,0,0,0.3)]">
        <button type="button" aria-label="Zoom in" className="flex flex-1 items-center justify-center">
          <svg viewBox="0 0 28 28" className="h-7 w-7" aria-hidden="true">
            <path d="M11 0H17V11H28V17H17V28H11V17H0V11H11Z" fill="#666" />
          </svg>
        </button>
        <span className="mx-2 h-px bg-[#e0e0e0]" />
        <button type="button" aria-label="Zoom out" className="flex flex-1 items-center justify-center">
          <span className="h-[6px] w-7 bg-[#666]" />
        </button>
      </div>

      <div className="absolute right-0 bottom-0 flex h-[21px] items-center bg-[#f2f2f2]/80 text-[15px] text-[#444]">
        <span className="px-2">Map data ©2020</span>
        <a href="#terms" className="border-l border-[#ddd] px-[9px]">
          Terms of Use
        </a>
      </div>
    </section>
  );
}

/* ---------- Page ---------- */

const container = "mx-auto w-full max-w-[1710px] px-[23px]";
const navLink = "flex items-center gap-[10px] px-3";
const label = "col-span-2 pt-[10px] text-[36px] leading-[54px]";
const field =
  "block w-full rounded-[6px] border-2 border-[#ced4da] bg-white px-[17px] text-2xl leading-9 text-[#495057] placeholder:text-[#6c757d]";

function Header() {
  return (
    <header className="bg-linear-to-r from-[#336699] to-[#003366]">
      <div className={`${container} grid grid-cols-[712fr_953fr]`}>
        <a href="#home" className="flex items-center gap-4 pt-[41px] pb-7 pl-[39px]">
          <Sunburst className="h-[81px] w-[92px]" />
          <span className="font-[Roboto] text-[40px] leading-none font-bold whitespace-nowrap text-[#262262]">
            KOLECTIV ARTS
          </span>
        </a>
        <form className="mt-[66px] flex h-[46px] items-center gap-6 self-start">
          <input
            type="search"
            aria-label="Search"
            placeholder="Search"
            className="h-full w-3/4 rounded-[5px] border-2 border-[#ced4da] bg-white px-3 text-[21px] text-[#495057] placeholder:text-[#6c757d]"
          />
          <button type="button" aria-label="Submit search" className="pt-px text-white">
            <SearchIcon />
          </button>
        </form>
      </div>
    </header>
  );
}

function NavBar() {
  return (
    <nav className="bg-[#003366] text-[36px] leading-[54px] whitespace-nowrap">
      <div className={`${container} flex items-center justify-between py-6`}>
        <div className="flex items-center text-white/50">
          <a href="#home" aria-label="Kolectiv Arts" className="mr-[27px] ml-1">
            <Sunburst className="h-[34px] w-9" />
          </a>
          <a href="#home" className={`${navLink} text-white`}>
            <HomeIcon />
            Home
          </a>
          <a href="#about" className={navLink}>
            <InfoIcon />
            About
          </a>
          <button type="button" className={navLink}>
            <ListIcon />
            Shop
            <span className="border-x-[10px] border-t-[11px] border-x-transparent border-t-current" />
          </button>
          <a href="#contact" className={navLink}>
            <CardIcon />
            Contact
          </a>
        </div>
        <a href="#login" className="flex items-center gap-[9px] text-white">
          <SignInIcon />
          Login | Sign in
        </a>
      </div>
    </nav>
  );
}

function Breadcrumb() {
  return (
    <nav aria-label="Breadcrumb" className="mb-6 rounded-[6px] bg-[#e9ecef] px-6 py-[18px] text-[36px] leading-[54px]">
      <ol className="flex gap-3 text-[#6c757d]">
        <li>
          <a href="#home" className="text-[#007bff]">
            Home
          </a>
        </li>
        <li aria-hidden="true">/</li>
        <li>Contact Us</li>
      </ol>
    </nav>
  );
}

function FeedbackForm() {
  return (
    <form className="grid grid-cols-12 gap-x-[45px]">
      <div className="col-span-10 grid grid-cols-12 gap-x-[45px] gap-y-6">
        <label htmlFor="first" className={`${label} pb-[11px]`}>
          First Name
        </label>
        <div className="col-span-10">
          <input id="first" type="text" placeholder="First Name" className={`${field} h-[57px]`} />
        </div>

        <label htmlFor="last" className={`${label} pb-[11px]`}>
          Last Name
        </label>
        <div className="col-span-10">
          <input id="last" type="text" placeholder="Last Name" className={`${field} h-[57px]`} />
        </div>

        <label htmlFor="tel" className={`${label} pb-[11px]`}>
          Contact Tel.
        </label>
        <div className="col-span-3">
          <input type="tel" aria-label="Area code" placeholder="Area code" className={`${field} h-[57px]`} />
        </div>
        <div className="col-span-7">
          <input id="tel" type="tel" placeholder="Tel. number" className={`${field} h-[57px]`} />
        </div>

        <label htmlFor="email" className={`${label} pb-[11px]`}>
          Email
        </label>
        <div className="col-span-10">
          <input id="email" type="email" placeholder="Email" className={`${field} h-[57px]`} />
        </div>

        <label htmlFor="message" className={label}>
          Your Feedback
        </label>
        <div className="col-span-10">
          <textarea id="message" rows={8} placeholder="Message" className={`${field} h-[310px] py-2`} />
        </div>

        <div className="col-span-10 col-start-3">
          <button
            type="submit"
            className="h-[57px] rounded-[6px] bg-[#007bff] px-[19px] text-2xl leading-9 whitespace-nowrap text-white"
          >
            Send Feedback
          </button>
        </div>
      </div>
    </form>
  );
}

const socials = [
  { name: "Instagram", icon: <FaInstagram className="h-[38px] w-[38px]" /> },
  { name: "Facebook", icon: <FaFacebookF className="h-9 w-9" /> },
  { name: "Twitter", icon: <FaTwitter className="h-[34px] w-[34px]" /> },
  { name: "YouTube", icon: <YoutubeIcon /> },
];

function Footer() {
  return (
    <footer className="bg-linear-to-b from-[#c0c0c0] to-white pt-[55px] pb-[52px]">
      <div className="mx-auto grid w-full max-w-[1710px] grid-cols-12">
        <div className="col-span-2 col-start-2 px-[23px]">
          <h5 className="mb-3 text-[30px] leading-9">Links</h5>
          <ul className="text-[36px] leading-[54px] text-[#007bff]">
            {["Home", "About", "Shop", "Contact"].map((name) => (
              <li key={name}>
                <a href={`#${name.toLowerCase()}`}>{name}</a>
              </li>
            ))}
          </ul>
        </div>
        <div className="col-span-5 px-[23px] pt-[92px]">
          <h5 className="mb-6 text-center text-[30px] leading-9">Social</h5>
          <div className="flex items-center justify-center gap-[26px]">
            {socials.map(({ name, icon }) => (
              <a key={name} href={`#${name.toLowerCase()}`} aria-label={name} className="flex h-10 w-[34px] items-center justify-center">
                <span className="shrink-0">{icon}</span>
              </a>
            ))}
          </div>
        </div>
        <div className="col-span-4 flex flex-col items-center gap-[23px] pt-[98px] text-2xl leading-9 text-[#007bff]">
          <a href="tel:+50912345678" className="flex items-center gap-[6px]">
            <PhoneIcon />
            +509 1234 5678
          </a>
          <a href="mailto:info@kolectivarts.com" className="flex items-center gap-[6px]">
            <EnvelopeIcon />
            info@kolectivarts.com
          </a>
        </div>
      </div>
    </footer>
  );
}

export default function App() {
  return (
    <div className="bg-white font-['Open_Sans',sans-serif] text-2xl text-[#212529]">
      <Header />
      <NavBar />
      <Breadcrumb />
      <main className={`${container} pb-[95px]`}>
        <LocationMap />
        <h2 className="mt-[85px] font-['Liberation_Serif',serif] text-[44px] leading-[58px] font-bold text-[#336699] italic">
          Send us your Feedback
        </h2>
        <hr className="mt-6 mb-6 border-t-2 border-[#e5e5e5]" />
        <FeedbackForm />
      </main>
      <Footer />
    </div>
  );
}
